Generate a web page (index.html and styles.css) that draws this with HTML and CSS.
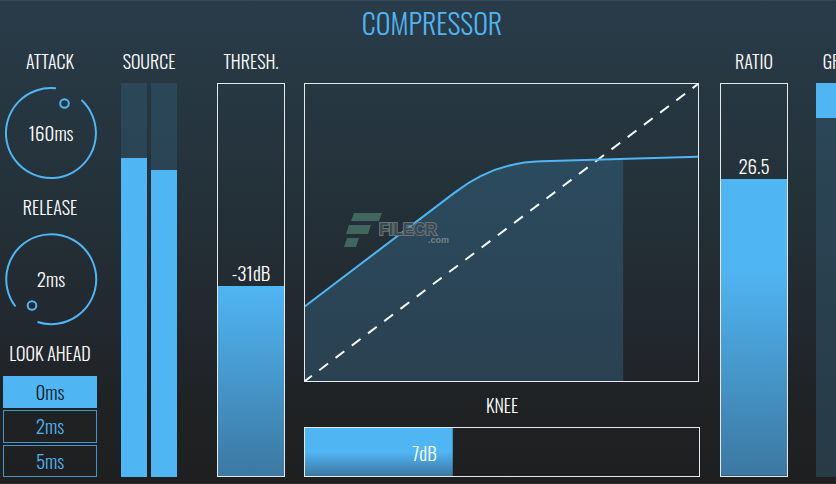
FILE: index.html
```html
<!DOCTYPE html>
<html lang="en">
<head>
<meta charset="utf-8">
<title>Compressor</title>
<link rel="stylesheet" href="styles.css">
</head>
<body>
<main class="panel">
  <h1 class="title">COMPRESSOR</h1>
  <div class="controls">
    <section class="timing">
      <label class="label" for="attack">ATTACK</label>
      <div class="dial">
        <svg class="dial-ring" viewBox="0 0 92 92" aria-hidden="true">
          <path d="M51 1.3A45 45 0 1 0 76.500 13"/>
          <circle cx="59.500" cy="16.500" r="4.300"/>
        </svg>
        <output class="dial-value" for="attack">160ms</output>
        <input class="dial-input" id="attack" type="range" min="0" max="300" value="160">
      </div>
      <label class="label" for="release">RELEASE</label>
      <div class="dial">
        <svg class="dial-ring" viewBox="0 0 92 92" aria-hidden="true">
          <path d="M10.500 73.500A45 45 0 1 1 32.500 89"/>
          <circle cx="27" cy="72.500" r="4.300"/>
        </svg>
        <output class="dial-value" for="release">2ms</output>
        <input class="dial-input" id="release" type="range" min="0" max="300" value="2">
      </div>
      <h2 class="label" id="look">LOOK AHEAD</h2>
      <div class="choices" role="group" aria-labelledby="look">
        <button class="choice choice-on" type="button">0ms</button>
        <button class="choice" type="button">2ms</button>
        <button class="choice" type="button">5ms</button>
      </div>
    </section>

    <section class="column source">
      <h2 class="label">SOURCE</h2>
      <div class="meters">
        <div class="meter"><div class="level" style="height:81%"></div></div>
        <div class="meter"><div class="level" style="height:78%"></div></div>
      </div>
    </section>

    <section class="column thresh">
      <label class="label" for="thresh">THRESH.</label>
      <div class="fader" style="--fill:48.500%">
        <input class="fader-input" id="thresh" type="range" min="-60" max="0" value="-31">
        <output class="fader-value" for="thresh">-31dB</output>
      </div>
    </section>

    <section class="column transfer">
      <div class="graph">
        <svg class="plot" viewBox="0 0 394 298" preserveAspectRatio="none" aria-hidden="true">
          <defs>
            <linearGradient id="area" x1="0" y1="0" x2="0" y2="1">
              <stop offset="0" stop-color="#2c4b5f"/>
              <stop offset="1" stop-color="#2a4151"/>
            </linearGradient>
          </defs>
          <path fill="url(#area)" d="M0 223L150 109C180 86 210 78 237 77.500L319 75.500V298H0Z"/>
          <path class="diagonal" d="M0 298L394 0"/>
          <path class="curve" d="M0 223L150 109C180 86 210 78 237 77.500L394 73"/>
        </svg>
        <svg class="mark" viewBox="0 0 108 38" aria-label="FILECR.com">
          <path fill="#40665f" d="M10 1H38L35 9H7ZM5 13H27L24 22H2ZM3 26H15L12 35H0Z"/>
          <text class="mark-name" x="35" y="23">FILECR</text>
          <text class="mark-domain" x="84" y="31">.com</text>
        </svg>
      </div>
      <label class="label knee-label" for="knee">KNEE</label>
      <div class="knee" style="--fill:37.500%">
        <input class="knee-input" id="knee" type="range" min="0" max="18" value="7">
        <output class="knee-value" for="knee">7dB</output>
      </div>
    </section>

    <section class="column ratio">
      <label class="label" for="ratio">RATIO</label>
      <div class="fader fader-late" style="--fill:75.700%">
        <input class="fader-input" id="ratio" type="range" min="1" max="35" step="0.5" value="26.5">
        <output class="fader-value" for="ratio">26.5</output>
      </div>
    </section>

    <section class="column reduction">
      <h2 class="label">GR</h2>
      <div class="meters">
        <div class="meter meter-down"><div class="level" style="height:9%"></div></div>
      </div>
    </section>
  </div>
</main>
</body>
</html>
```

FILE: styles.css
```css
* { box-sizing: border-box; }

:root {
  --blue: #50b5f3;
  --blue-deep: #3c78a1;
  --track: #2b4758;
  --line: #e4e9eb;
}

body {
  margin: 0;
  overflow: hidden;
  background: #1f1f20;
  color: #fff;
  font: 300 18px/24px Oswald, "Liberation Sans Narrow", "Liberation Sans", sans-serif;
}

/* The panel runs past the right edge of the window. */
.panel {
  display: flex;
  flex-direction: column;
  width: calc(100% + 28px);
  min-height: 100vh;
  padding: 0 16px 6px 3px;
  border-top: 1px solid #344954;
  border-bottom: 1px solid #2a2a2c;
  background: linear-gradient(#293c49, #24323a 38%, #22272e 70%, #1f2223 84%, #1f1f20);
}

.title {
  margin: 0 -13px 0 0;
  padding: 2px 0 7px;
  color: var(--blue);
  font-size: 28px;
  font-weight: 300;
  line-height: 40px;
  text-align: center;
}

.controls {
  flex: 1;
  display: grid;
  grid-template-columns: 94px 80px 108px minmax(200px, 1fr) 88px 60px;
}

.source { margin-left: 24px; }
.thresh { margin-left: 40px; }
.transfer { margin-left: 19px; }
.ratio { margin-left: 20px; }
.reduction { margin-left: 28px; }

.column, .timing {
  display: flex;
  flex-direction: column;
}

.label {
  display: block;
  margin: 0 -10px;
  padding-bottom: 2px;
  font-size: 18px;
  font-weight: 300;
  line-height: 22px;
  text-align: center;
  white-space: nowrap;
}

/* Dials */
.dial {
  position: relative;
  display: grid;
  place-items: center;
  width: 92px;
  height: 92px;
  margin: 13px 0 17px 2px;
}

.dial-ring {
  grid-area: 1 / 1;
  width: 92px;
  height: 92px;
  overflow: visible;
  fill: none;
  stroke: var(--blue);
  stroke-width: 2;
}

.dial-value {
  grid-area: 1 / 1;
  padding-bottom: 2px;
  font-size: 19px;
}

.dial-input {
  position: absolute;
  inset: 0;
  width: 100%;
  height: 100%;
  margin: 0;
  opacity: 0;
}

.choices {
  flex: 1;
  display: flex;
  flex-direction: column;
  gap: 2px;
  margin-top: 10px;
}

.choice {
  flex: 1;
  padding: 0 0 2px;
  border: 1px solid #4596c8;
  background: transparent;
  color: var(--blue);
  font: inherit;
  font-size: 19px;
}

.choice-on {
  border-color: var(--blue);
  background: var(--blue);
  color: #0c1a26;
}

/* Level meters */
.meters {
  flex: 1;
  display: flex;
  gap: 4px;
  margin-top: 9px;
}

.meter {
  flex: 1;
  display: flex;
  align-items: flex-end;
  background: linear-gradient(var(--track), #273a46);
}

.meter-down { align-items: flex-start; }

.level {
  width: 100%;
  background: var(--blue);
}

/* Faders */
.fader {
  --flat: 0%;
  position: relative;
  flex: 1;
  margin-top: 9px;
  border: 1px solid var(--line);
}

.fader-late { --flat: 30%; }

.fader-input, .knee-input {
  appearance: none;
  position: absolute;
  inset: 0;
  width: 100%;
  height: 100%;
  margin: 0;
}

.fader-input {
  writing-mode: vertical-lr;
  direction: rtl;
  background: linear-gradient(var(--blue) var(--flat), var(--blue-deep)) bottom / 100% var(--fill) no-repeat;
}

.fader-input::-webkit-slider-thumb, .knee-input::-webkit-slider-thumb {
  appearance: none;
  width: 1px;
  height: 1px;
}

.fader-value {
  position: absolute;
  inset: auto 0 var(--fill);
  padding-bottom: 2px;
  font-size: 19px;
  text-align: center;
  pointer-events: none;
}

/* Transfer curve */
.graph {
  position: relative;
  flex: 1;
  margin: 33px 1px 0 0;
  border: 1px solid var(--line);
}

.plot {
  position: absolute;
  width: 100%;
  height: 100%;
}

.curve {
  fill: none;
  stroke: var(--blue);
  stroke-width: 2;
}

.diagonal {
  fill: none;
  stroke: #f4fafa;
  stroke-width: 2;
  stroke-dasharray: 11 9.4;
  stroke-dashoffset: 2.4;
}

.mark {
  position: absolute;
  left: 10%;
  top: 43%;
  width: 108px;
  height: 38px;
}

.mark text {
  fill: #3b4850;
  stroke: #68757c;
  paint-order: stroke;
  font-family: "Liberation Sans", sans-serif;
  font-weight: 700;
}

.mark-name { font-size: 16px; stroke-width: 2; }

.mark .mark-domain {
  fill: #74828a;
  stroke: none;
  font-size: 9px;
}

.knee-label { margin-top: 12px; }

.knee {
  position: relative;
  height: 50px;
  margin-top: 9px;
  border: 1px solid var(--line);
}

.knee-input {
  background: linear-gradient(var(--blue) 50%, var(--blue-deep)) left / var(--fill) 100% no-repeat;
}

.knee-value {
  position: absolute;
  inset: 0 calc(100% - var(--fill)) 0 auto;
  padding-right: 16px;
  font-size: 19px;
  line-height: 48px;
  pointer-events: none;
}
```
